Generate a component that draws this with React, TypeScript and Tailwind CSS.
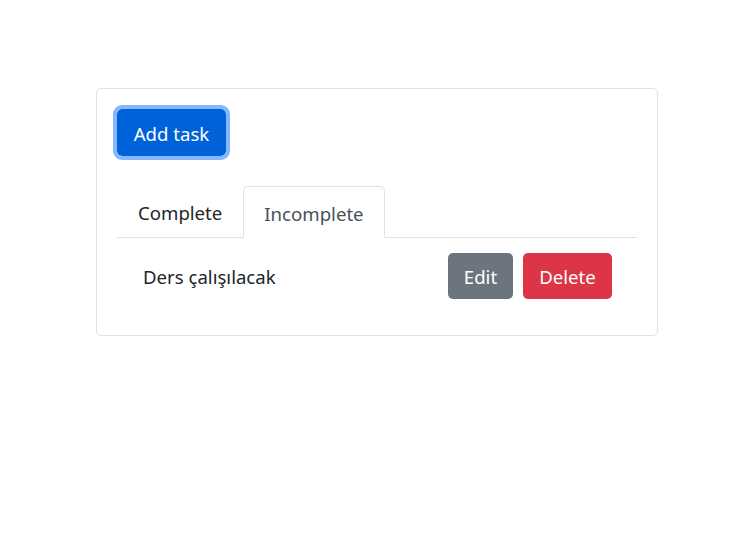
import React from "react";

export default function App() {
  return (
    <div className="w-[732px] h-[537px] bg-white" style={{ fontFamily: '"Noto Sans", "Segoe UI", sans-serif' }}>
      <div className="pt-[88px] pl-[96px]">
        <div className="w-[562px] h-[248px] border border-[#dee2e6] rounded-[5px] px-[20px] pt-[20px]">
          <button className="h-[47px] w-[109px] pt-[3px] rounded-[5px] bg-[#0062d9] text-white text-[18.6px] leading-none outline outline-4 outline-[#86b7fe]">
            Add task
          </button>
          <div className="mt-[30px] flex border-b border-[#dee2e6] text-[18.6px]">
            <div className="h-[51px] pt-[3px] px-[20px] flex items-center text-[#212529] border border-transparent">Complete</div>
            <div className="h-[52px] pt-[3px] -mb-px px-[20px] flex items-center text-[#495057] border border-[#dee2e6] border-b-white rounded-t-[5px] bg-white">Incomplete</div>
          </div>
          <div className="flex items-center justify-between pl-[26px] pr-[25px] pt-[15px]">
            <span className="text-[18.6px] text-[#212529] pt-[2px]">Ders çalışılacak</span>
            <div className="flex gap-[10px]">
              <button className="h-[46px] w-[65px] pt-[2px] rounded-[5px] bg-[#6c757d] text-white text-[18.6px]">Edit</button>
              <button className="h-[46px] w-[89px] pt-[2px] rounded-[5px] bg-[#dc3545] text-white text-[18.6px]">Delete</button>
            </div>
          </div>
        </div>
      </div>
    </div>
  );
}
